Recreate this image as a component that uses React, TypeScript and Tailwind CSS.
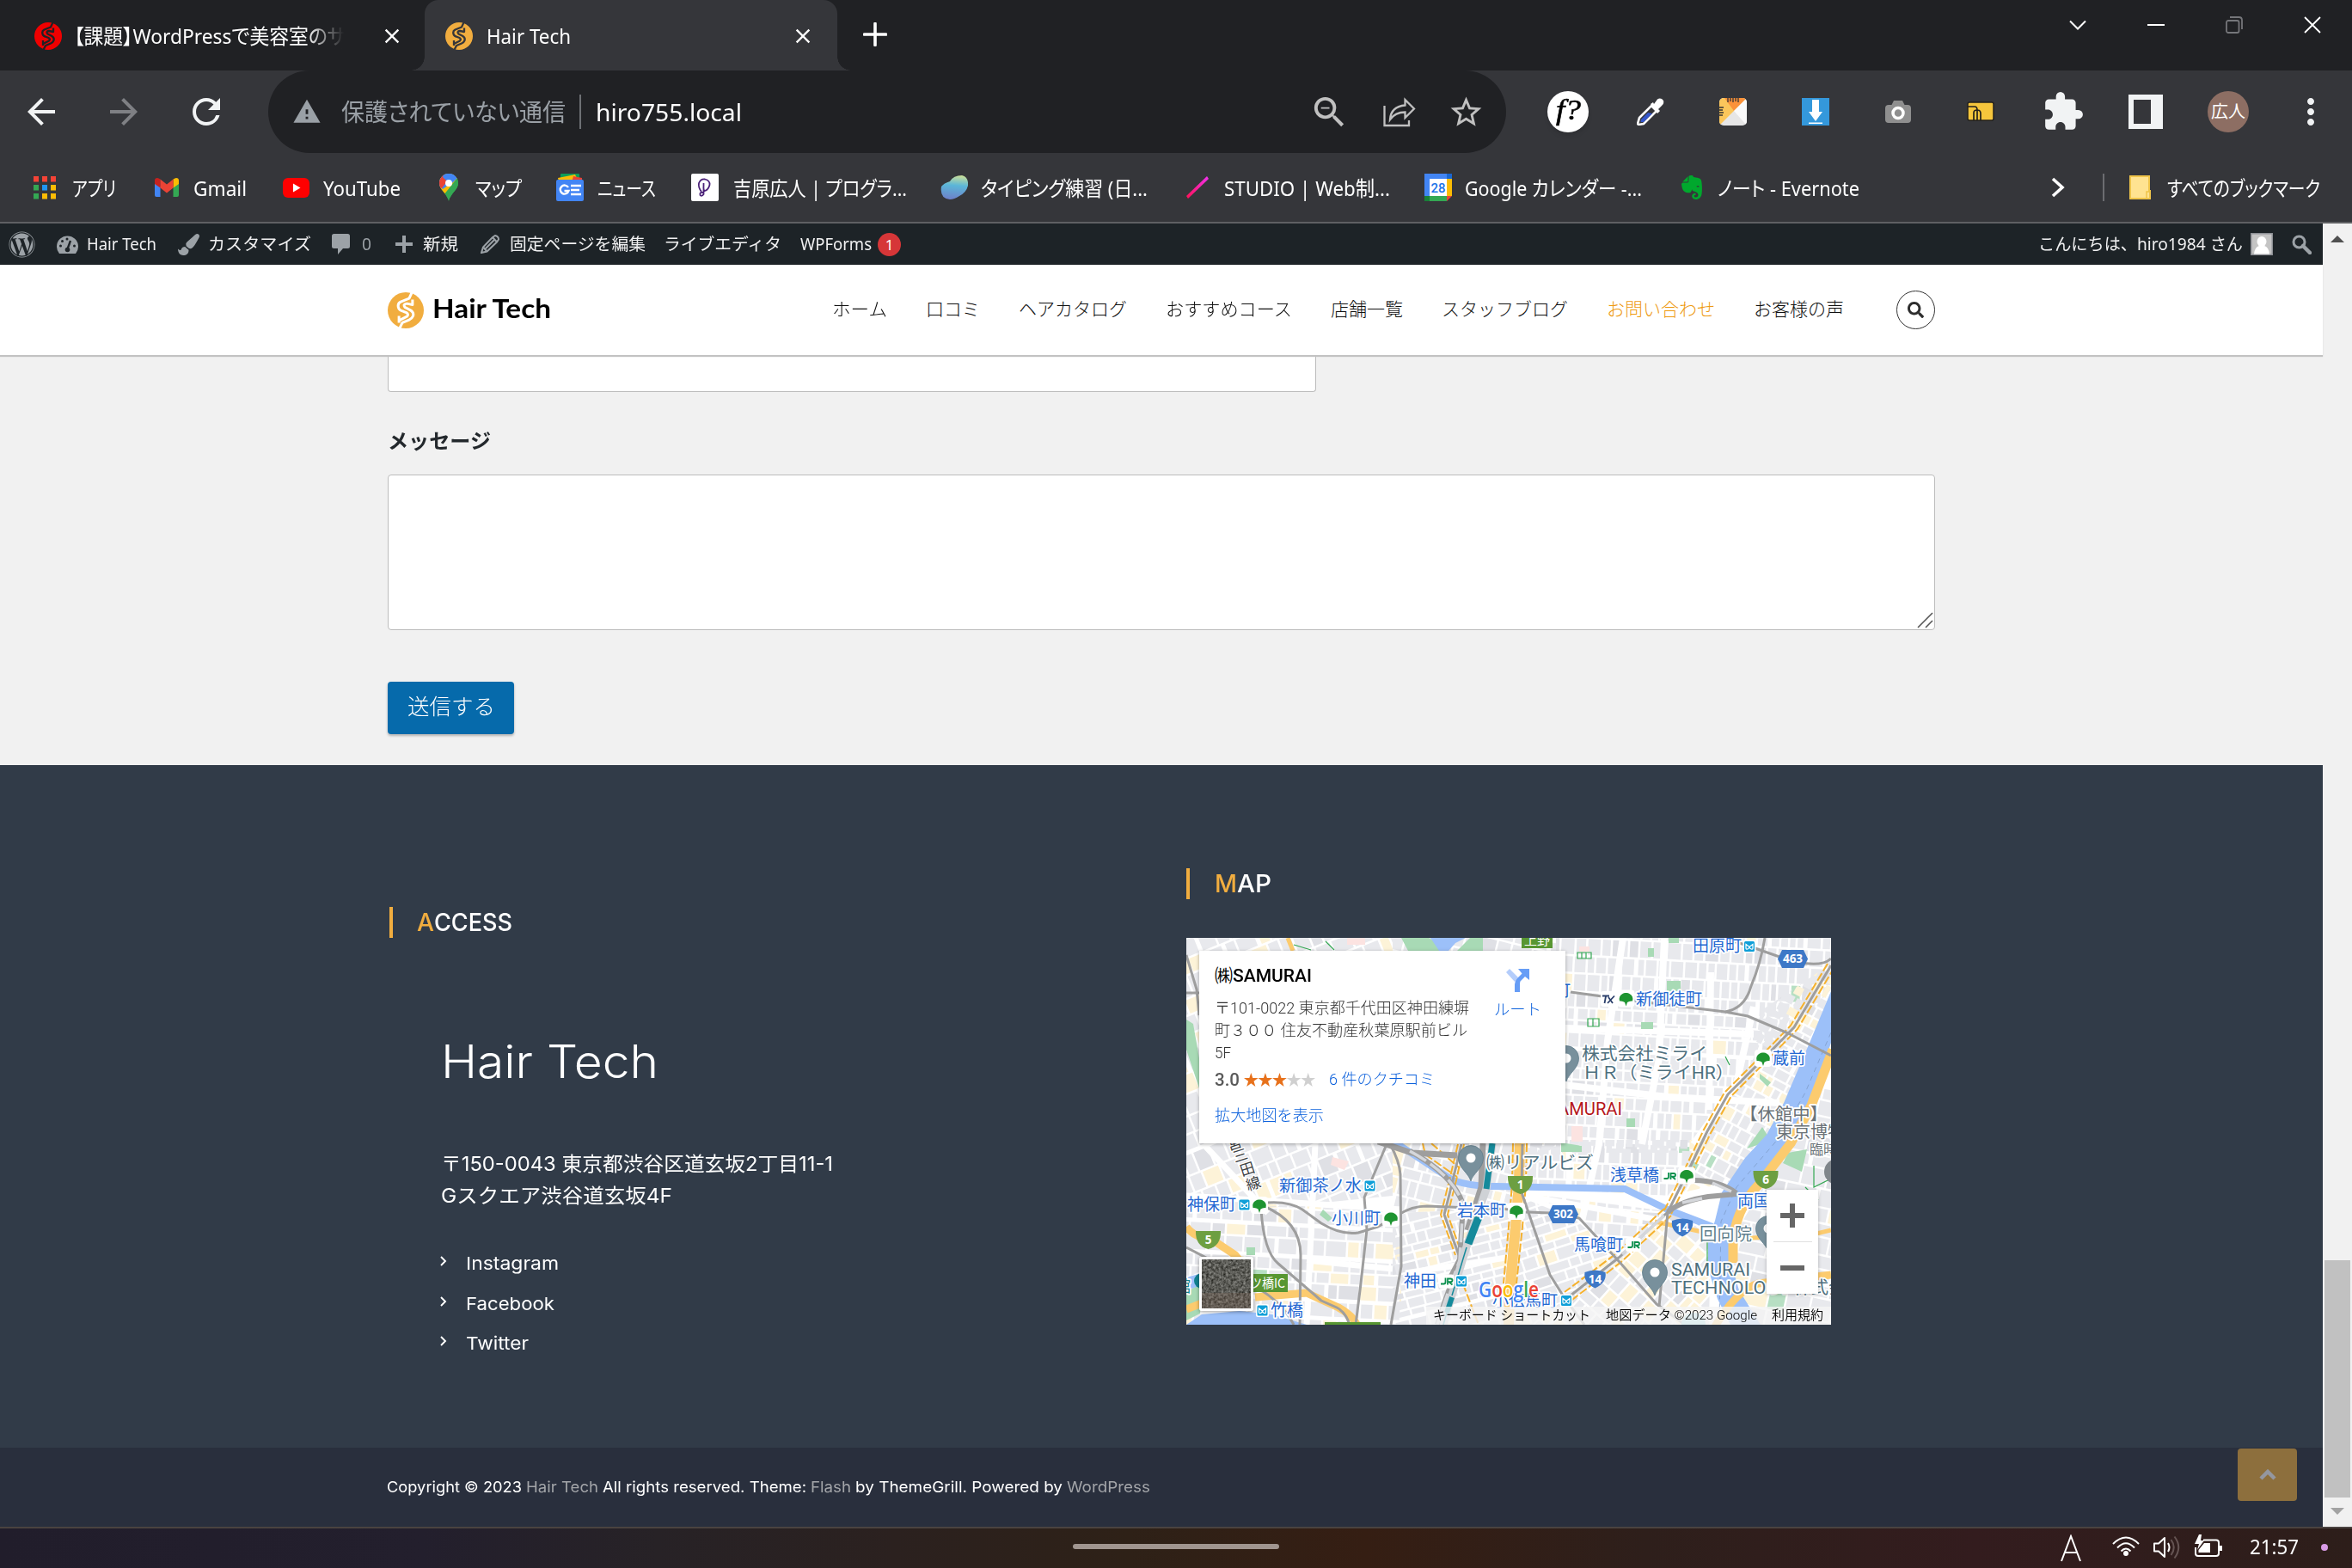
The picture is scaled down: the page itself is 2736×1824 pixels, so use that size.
import { useLayoutEffect, useRef } from "react";
import type { ReactNode } from "react";
import {
  MdArrowBack,
  MdArrowForward,
  MdRefresh,
  MdWarning,
  MdStarBorder,
  MdZoomOut,
  MdExtension,
  MdMoreVert,
  MdClose,
} from "react-icons/md";
import { FaWordpress, FaPaintBrush, FaEvernote, FaSearch } from "react-icons/fa";

/** A single line of text condensed or expanded horizontally so that it fills `w` pixels. */
function T({ w, className = "", children }: { w: number; className?: string; children: string }) {
  const ref = useRef<HTMLSpanElement>(null);
  useLayoutEffect(() => {
    const el = ref.current;
    if (!el) return;
    el.style.transform = "none";
    const natural = el.getBoundingClientRect().width;
    el.style.transform = `scaleX(${w / natural})`;
    el.style.marginRight = `${w - natural}px`;
  }, [w, children]);
  return (
    <span ref={ref} className={`inline-block shrink-0 origin-left whitespace-pre ${className}`}>
      {children}
    </span>
  );
}

function SLogo({ size, bg, fg }: { size: number; bg: string; fg: string }) {
  return (
    <svg width={size} height={size} viewBox="0 0 32 32" className="shrink-0">
      <circle cx="16" cy="16" r="16" fill={bg} />
      <g fill="none" stroke={fg} strokeWidth="2.3" strokeLinejoin="round">
        <path d="M22 -1 L19 5.500 L11.500 8.500 Q8.500 10 9.500 13.500 Q10 16 14 17 L16.500 18 Q19 19.500 17 21.500 L10 25" />
        <path d="M22 6.500 V11 L17 10 Q13 10.500 15.500 13.500 L19.500 15.500 Q23.500 17.500 22.500 21 Q21.500 23.500 19 24.500 L13 27 L10 33 M10 21 V27" />
      </g>
    </svg>
  );
}

function TabStrip() {
  return (
    <div className="flex h-[82px] bg-[#202124] text-[24px] leading-none text-[#f1f3f4]">
      <div className="flex w-[494px] items-center pl-10 pt-[2px]">
        <SLogo size={32} bg="#f00000" fg="#202124" />
        <div className="relative ml-[14px] w-[314px] overflow-hidden py-2">
          <T w={354} className="text-white [font-feature-settings:'palt']">【課題】WordPressで美容室のサイト</T>
          <div className="absolute inset-y-0 right-0 w-[44px] bg-linear-to-r from-[#20212400] to-[#202124]" />
        </div>
        <MdClose className="ml-[42px] size-7 text-white" />
      </div>
      <div className="relative flex w-[480px] items-center rounded-t-[16px] bg-[#35363a] pl-6 pt-[2px]">
        <div className="absolute -left-[16px] bottom-0 size-4 bg-[radial-gradient(circle_at_0_0,#202124_15.500px,#35363a_16px)]" />
        <div className="absolute -right-[16px] bottom-0 size-4 bg-[radial-gradient(circle_at_100%_0,#202124_15.500px,#35363a_16px)]" />
        <SLogo size={32} bg="#f1ad3f" fg="#35363a" />
        <T w={98} className="ml-4 text-white">Hair Tech</T>
        <MdClose className="ml-auto mr-[26px] size-7 text-white" />
      </div>
      <svg width="28" height="28" viewBox="0 0 28 28" className="ml-[30px] mt-[26px]">
        <path d="M14 1.500 V26.500 M1.500 14 H26.500" stroke="#fff" strokeWidth="3.600" strokeLinecap="round" />
      </svg>
      <div className="ml-auto flex items-start gap-[71px] pr-9 pt-[19px]">
        <svg width="20" height="20" viewBox="0 0 20 20" fill="none">
          <path d="M1 5.500 L10 14.500 L19 5.500" stroke="#fff" strokeWidth="2" />
        </svg>
        <svg width="20" height="20" viewBox="0 0 20 20">
          <path d="M0 10 H20" stroke="#fff" strokeWidth="2" />
        </svg>
        <svg width="20" height="20" viewBox="0 0 20 20" fill="none" stroke="#75767a" strokeWidth="1.800">
          <rect x="1" y="5" width="14.500" height="14" rx="2" />
          <path d="M5 1 H15.500 Q19 1 19 4.500 V15" />
        </svg>
        <svg width="20" height="20" viewBox="0 0 20 20">
          <path d="M1 1 L19 19 M19 1 L1 19" stroke="#fff" strokeWidth="1.800" />
        </svg>
      </div>
    </div>
  );
}

function Slot({ children }: { children: ReactNode }) {
  return <div className="flex w-24 shrink-0 items-center justify-center">{children}</div>;
}

function Toolbar() {
  return (
    <div className="flex h-24 items-stretch bg-[#35363a] text-white">
      <div className="flex w-[312px] items-center pl-6 text-[#f1f3f4]">
        <MdArrowBack className="size-12" />
        <MdArrowForward className="ml-12 size-12 text-[#7f8084]" />
        <MdRefresh className="ml-12 size-12" />
      </div>
      <div className="flex w-[1440px] items-center rounded-full bg-[#202124] pl-7 text-[28px] leading-none">
        <MdWarning className="size-[34px] text-[#9aa0a6]" />
        <T w={261} className="ml-[23px] text-[#9aa0a6] [font-feature-settings:'palt']">保護されていない通信</T>
        <div className="ml-[16px] h-10 w-[2px] bg-[#6d7074]" />
        <T w={170} className="ml-[17px]">hiro755.local</T>
        <div className="ml-auto flex items-center pr-6 text-[#c0c0c0]">
          <MdZoomOut className="size-[47px]" />
          <svg width="38" height="35" viewBox="0 0 38 35" fill="none" stroke="currentColor" strokeWidth="2.300" className="ml-[39px]">
            <path d="M1.500 10 V33 H30 V27" />
            <path d="M25.500 3 L36 13.500 L25.500 24 V17.500 Q14 17.500 8 26 Q9 11 25.500 9.500 Z" />
          </svg>
          <MdStarBorder className="ml-[37px] mr-[1px] size-[43px]" />
        </div>
      </div>
      <div className="ml-6 flex">
        <Slot>
          <div className="flex size-12 items-center justify-center rounded-full bg-white pb-1 font-['Liberation_Serif',serif] text-[34px] italic leading-none text-black shadow-md">
            <T w={29} className="[-webkit-text-stroke:0.600px_black]">f?</T>
          </div>
        </Slot>
        <Slot>
          <svg width="32" height="32" viewBox="0 0 32 32">
            <path d="M17 9 L23 15 L8 30 L2 31 L1 30 L3 23 Z" fill="#35363a" stroke="#fff" strokeWidth="2.600" />
            <path d="M13 17 L18 18 L8 28 L4.500 28 L5 25 Z" fill="#3355c9" />
            <path d="M16 7 L19 5 L20 7 L24 1.500 Q28 -1 31 3 Q32 7 29 9 L25 13 L27 15 L24 18 Z" fill="#fff" />
          </svg>
        </Slot>
        <Slot>
          <svg width="32" height="32" viewBox="0 0 32 32">
            <defs>
              <clipPath id="ruler"><rect width="32" height="32" rx="5" /></clipPath>
            </defs>
            <g clipPath="url(#ruler)">
              <rect width="32" height="32" fill="#e6e6e6" />
              <path d="M0 0 H32 L0 32 Z" fill="#fbc65b" />
              <path d="M6 0 H32 L17 15 Z" fill="#fb923a" />
              <path d="M32 0 V32 L17 15 Z" fill="#fafafa" />
            </g>
            <path d="M10 0 V5 M13 0 V4 M16 0 V5 M19 0 V4 M22 0 V5 M0 11 H5 M0 14 H4 M0 17 H5 M0 20 H4" stroke="#333" strokeWidth="1.300" />
          </svg>
        </Slot>
        <Slot>
          <svg width="32" height="32" viewBox="0 0 32 32">
            <rect width="32" height="32" fill="#3498db" />
            <path d="M12 2 H20 V16 H24 L16 27 L8 16 H12 Z M8 28.500 H24 V30 H8 Z" fill="#fff" />
          </svg>
        </Slot>
        <Slot>
          <svg width="30" height="28" viewBox="0 0 30 28">
            <rect y="6" width="30" height="21" rx="4" fill="#8f8f8f" />
            <path d="M7 7 L10 1 H20 L23 7 Z" fill="#8f8f8f" />
            <circle cx="15" cy="15.500" r="6" fill="#8f8f8f" stroke="#fff" strokeWidth="3.500" />
          </svg>
        </Slot>
        <Slot>
          <svg width="32" height="24" viewBox="0 0 32 24">
            <rect x="1" y="1" width="30" height="21" rx="2" fill="#f6c63c" stroke="#23211c" strokeWidth="1.500" />
            <path d="M1 6 H9 Q12 6 12 10 V22 M8 22 V13 Q8 10 12 10 Q16 10 16 14 V22" fill="none" stroke="#23211c" strokeWidth="1.700" />
          </svg>
        </Slot>
        <Slot><MdExtension className="size-[50px] text-[#f1f3f4]" /></Slot>
        <Slot>
          <div className="h-10 w-10 border-y-[6px] border-l-[6px] border-r-[14px] border-[#f1f3f4]" />
        </Slot>
        <Slot>
          <div className="flex size-12 items-center justify-center rounded-full bg-[#8d6e63] text-[20px] leading-none">
            <T w={40}>広人</T>
          </div>
        </Slot>
        <Slot><MdMoreVert className="size-12 text-[#f1f3f4]" /></Slot>
      </div>
    </div>
  );
}

const appDots = ["#f44336", "#f44336", "#f44336", "#34a853", "#2196f3", "#fbbc05", "#34a853", "#fbbc05", "#fbbc05"];

const bookmarks: { label: string; w: number; lead: string; gap: string; icon: ReactNode }[] = [
  {
    label: "アプリ", w: 51, lead: "ml-[39px]", gap: "ml-[19px]",
    icon: (
      <svg width="26" height="27" viewBox="0 0 26 27">
        {appDots.map((c, i) => (
          <rect key={i} x={(i % 3) * 10} y={Math.floor(i / 3) * 10} width="6" height="6.500" fill={c} />
        ))}
      </svg>
    ),
  },
  {
    label: "Gmail", w: 62, lead: "ml-[45px]", gap: "ml-[17px]",
    icon: (
      <svg width="28" height="22" viewBox="0 0 28 22">
        <path d="M0 3 V20 Q0 22 2 22 H6.500 V10 Z" fill="#4285f4" />
        <path d="M28 3 V20 Q28 22 26 22 H21.500 V10 Z" fill="#34a853" />
        <path d="M0 7 V3 Q0 0 3 0 Q4.500 0 6.500 1.500 V11.500 Z" fill="#c5221f" />
        <path d="M28 7 V3 Q28 0 25 0 Q23.500 0 21.500 1.500 V11.500 Z" fill="#fbbc04" />
        <path d="M6.500 1.500 L14 7.500 L21.500 1.500 V11.500 L14 17.500 L6.500 11.500 Z" fill="#ea4335" />
      </svg>
    ),
  },
  {
    label: "YouTube", w: 90, lead: "ml-[42px]", gap: "ml-[16px]",
    icon: (
      <svg width="31" height="23" viewBox="0 0 31 23">
        <rect width="31" height="23" rx="6" fill="#f00" />
        <path d="M12 6.500 L20.500 11.500 L12 16.500 Z" fill="#fff" />
      </svg>
    ),
  },
  {
    label: "マップ", w: 54, lead: "ml-[45px]", gap: "ml-[20px]",
    icon: (
      <svg width="22" height="32" viewBox="0 0 22 32">
        <defs>
          <clipPath id="pin"><path d="M11 0 A11 11 0 0 1 22 11 C22 19 13.500 22 11 32 C8.500 22 0 19 0 11 A11 11 0 0 1 11 0 Z" /></clipPath>
        </defs>
        <g clipPath="url(#pin)">
          <rect width="22" height="32" fill="#34a853" />
          <path d="M0 0 H22 V6 L4 26 L0 22 Z" fill="#fbbc04" />
          <path d="M0 0 H22 V4 L11 13 L4 18 L0 14 Z" fill="#4285f4" />
          <path d="M0 0 H6 L9 9 L3 17 L0 16 Z" fill="#ea4335" />
          <path d="M5 0 H22 V4 L13 13 L4 4 Z" fill="#4285f4" />
          <path d="M22 6 V20 L8 32 L6 24 L20 6 Z" fill="#34a853" />
        </g>
        <circle cx="11" cy="11" r="4" fill="#fff" />
      </svg>
    ),
  },
  {
    label: "ニュース", w: 68, lead: "ml-[40px]", gap: "ml-[16px]",
    icon: (
      <svg width="32" height="32" viewBox="0 0 32 32">
        <rect x="5" width="22" height="12" rx="1" fill="#0f9d58" />
        <path d="M2 5 L22 1 L26 9 H3 Z" fill="#fbbc04" />
        <path d="M20 3 L30 5 V10 H18 Z" fill="#ea4335" />
        <rect y="7" width="32" height="25" rx="2" fill="#4285f4" />
        <path d="M17 14 H29 M17 19 H27 M17 24 H29" stroke="#fff" strokeWidth="2.400" />
        <path d="M14 16 A5 5 0 1 0 14.500 20 H9.500" fill="none" stroke="#fff" strokeWidth="2.400" />
      </svg>
    ),
  },
  {
    label: "吉原広人 | プログラ...", w: 202, lead: "ml-[41px]", gap: "ml-[17px]",
    icon: (
      <svg width="32" height="32" viewBox="0 0 32 32">
        <rect width="32" height="32" rx="2" fill="#fff" />
        <path d="M12 21 Q8 16 9 11 Q11 6 16 6.500 Q22 8 21.500 13 Q20 19 16 20 Q14 20 14.500 14 V11 M14.500 18 V24 Q12 27 10.500 25 Q9.500 21 14 22" fill="none" stroke="#4b2178" strokeWidth="1.800" />
      </svg>
    ),
  },
  {
    label: "タイピング練習 (日...", w: 194, lead: "ml-[39px]", gap: "ml-[15px]",
    icon: (
      <svg width="32" height="28" viewBox="0 0 32 28">
        <defs>
          <linearGradient id="blob" x1="0.400" y1="0" x2="0.300" y2="1">
            <stop offset="0" stopColor="#c5dd9b" />
            <stop offset="0.400" stopColor="#5bb6d8" />
            <stop offset="1" stopColor="#6e7fc9" />
          </linearGradient>
        </defs>
        <path d="M1 13 Q4 9 11 7 Q15 0 25 0 Q33 2 32 12 Q30 20 22 24 Q16 28 11 28 Q-1 27 1 13 Z" fill="url(#blob)" />
      </svg>
    ),
  },
  {
    label: "STUDIO | Web制...", w: 193, lead: "ml-[45px]", gap: "ml-[18px]",
    icon: (
      <svg width="26" height="26" viewBox="0 0 26 26">
        <defs>
          <linearGradient id="slash" x1="1" y1="0" x2="0" y2="1">
            <stop offset="0" stopColor="#f032f0" />
            <stop offset="1" stopColor="#ff1053" />
          </linearGradient>
        </defs>
        <path d="M24 0 L26 3 L2 26 L0 23 Z" fill="url(#slash)" />
      </svg>
    ),
  },
  {
    label: "Google カレンダー -...", w: 206, lead: "ml-[40px]", gap: "ml-[15px]",
    icon: (
      <svg width="32" height="32" viewBox="0 0 32 32">
        <rect width="26" height="26" fill="#4285f4" />
        <rect x="26" width="6" height="6" fill="#1967d2" />
        <rect x="26" y="6" width="6" height="20" fill="#fbbc04" />
        <rect y="26" width="6" height="6" fill="#188038" />
        <rect x="6" y="26" width="20" height="6" fill="#34a853" />
        <path d="M26 26 H32 L26 32 Z" fill="#ea4335" />
        <rect x="6" y="6" width="20" height="20" fill="#fff" />
        <text x="16" y="21.500" textAnchor="middle" fontSize="15" fill="#1a73e8" fontFamily="Roboto, sans-serif" fontWeight="500">28</text>
      </svg>
    ),
  },
  {
    label: "ノート - Evernote", w: 165, lead: "ml-[42px]", gap: "ml-[15px]",
    icon: <FaEvernote className="-mr-[1px] h-8 w-[32px] text-[#00a82d]" />,
  },
];

function BookmarksBar() {
  return (
    <div className="flex h-[82px] items-center border-b-2 border-[#5f6063] bg-[#35363a] text-[24px] leading-none text-white [font-feature-settings:'palt']">
      {bookmarks.map((b) => (
        <div key={b.label} className={`flex shrink-0 items-center ${b.lead}`}>
          {b.icon}
          <div className={`pt-[2px] ${b.gap}`}>
            <T w={b.w}>{b.label}</T>
          </div>
        </div>
      ))}
      <div className="ml-auto flex items-center pr-[37px]">
        <svg width="16" height="24" viewBox="0 0 16 24">
          <path d="M2 2 L13 12 L2 22" fill="none" stroke="#fff" strokeWidth="3.600" />
        </svg>
        <div className="ml-[44px] h-8 w-[2px] bg-[#6b6c70]" />
        <svg width="25" height="28" viewBox="0 0 25 28" className="ml-[29px]">
          <path d="M1 1 H23 V18 H24 V27 H1 Z" fill="#ffe391" stroke="#f0c54a" strokeWidth="2" />
          <path d="M20 27 V19 H24" fill="none" stroke="#f0c54a" strokeWidth="1.500" />
        </svg>
        <div className="ml-[19px] pt-[2px]">
          <T w={178}>すべてのブックマーク</T>
        </div>
      </div>
    </div>
  );
}

function AdminBar() {
  return (
    <div className="flex h-12 items-center bg-[#1d2327] text-[19.500px] leading-none text-[#f0f0f1]">
      <FaWordpress className="ml-[10px] size-[31px] text-[#9ca2a7]" />
      <svg width="25" height="21" viewBox="0 0 25 21" className="ml-[25px]">
        <path d="M3 21 A12.500 12.500 0 1 1 22 21 Z" fill="#9ca2a7" />
        <path d="M12 17 L16 6" stroke="#1d2327" strokeWidth="2.400" />
        <g fill="#1d2327">
          <circle cx="12.500" cy="16.500" r="2.800" /><circle cx="4.500" cy="12" r="1.500" /><circle cx="6.500" cy="6.500" r="1.500" />
          <circle cx="12" cy="4" r="1.500" /><circle cx="20.500" cy="12" r="1.500" />
        </g>
      </svg>
      <T w={81} className="ml-[10px]">Hair Tech</T>
      <FaPaintBrush className="ml-[25px] size-[25px] text-[#9ca2a7]" />
      <T w={120} className="ml-[10px]">カスタマイズ</T>
      <svg width="21" height="24" viewBox="0 0 21 24" className="ml-[24px]">
        <path d="M2.500 0 H18.500 Q21 0 21 2.500 V14.500 Q21 17 18.500 17 H13 L7 24 V17 H2.500 Q0 17 0 14.500 V2.500 Q0 0 2.500 0 Z" fill="#9ca2a7" />
      </svg>
      <T w={11} className="ml-[14px] text-[#9ca2a7]">0</T>
      <svg width="20" height="20" viewBox="0 0 20 20" className="ml-[28px]">
        <path d="M10 0 V20 M0 10 H20" stroke="#9ca2a7" strokeWidth="4" />
      </svg>
      <T w={41} className="ml-[12px]">新規</T>
      <svg width="22" height="22" viewBox="0 0 22 22" className="ml-[26px]" fill="none" stroke="#9ca2a7" strokeWidth="2">
        <path d="M14 3 L17 1 Q21 2 21 5.500 L19 8.500 L7.500 19.500 L1 21 L3 14.500 Z" />
        <path d="M14 3 L19 8.500 M3 14.500 L7.500 19.500 M5.500 16.500 L16 6" />
      </svg>
      <T w={158} className="ml-[12px]">固定ページを編集</T>
      <T w={137} className="ml-[21px]">ライブエディタ</T>
      <T w={83} className="ml-[22px]">WPForms</T>
      <div className="ml-[7px] flex size-[27px] items-center justify-center rounded-full bg-[#d63638] text-[17px] text-white">1</div>
      <T w={238} className="ml-auto">こんにちは、hiro1984 さん</T>
      <svg width="26" height="26" viewBox="0 0 26 26" className="ml-[9px]">
        <rect width="26" height="26" fill="#8c8f94" />
        <rect x="1.500" y="1.500" width="23" height="23" fill="#c4c4c4" />
        <ellipse cx="13" cy="10" rx="5.500" ry="6" fill="#fff" />
        <path d="M4 24.500 Q5 16 10 15 H16 Q21 16 22 24.500 Z" fill="#fff" />
      </svg>
      <svg width="23" height="23" viewBox="0 0 23 23" className="ml-[22px] mr-[13px]">
        <circle cx="8.500" cy="8.500" r="6.500" fill="none" stroke="#9ca2a7" strokeWidth="3" />
        <path d="M13 13 L21 21" stroke="#9ca2a7" strokeWidth="4.500" strokeLinecap="round" />
      </svg>
    </div>
  );
}

const navItems: [string, number, string][] = [
  ["ホーム", 64, ""],
  ["口コミ", 63, ""],
  ["ヘアカタログ", 126, ""],
  ["おすすめコース", 147, ""],
  ["店舗一覧", 84, ""],
  ["スタッフブログ", 147, ""],
  ["お問い合わせ", 126, "text-[#ee9a10]"],
  ["お客様の声", 105, ""],
];

function SiteHeader() {
  return (
    <div className="relative z-10 flex h-[105px] items-center bg-white pl-[451px] shadow-[0_2px_1px_#c2c2c2]">
      <SLogo size={42} bg="#f1ad3f" fg="#ffffff" />
      <T w={138} className="mb-[6px] ml-[10px] font-[Lato,sans-serif] text-[30px] font-bold leading-none text-black">Hair Tech</T>
      <div className="mb-[2px] ml-[327px] flex items-center gap-[45px] text-[21px] font-light leading-none text-[#111]">
        {navItems.map(([label, w, color]) => (
          <T key={label} w={w} className={color}>{label}</T>
        ))}
      </div>
      <div className="ml-[61px] flex size-[45px] items-center justify-center rounded-full border-[1.500px] border-[#333]">
        <FaSearch className="size-[19px] text-[#2d2d2d]" />
      </div>
    </div>
  );
}

function ContactForm() {
  return (
    <div className="flex h-[477px] flex-col items-start bg-[#f1f1f1] pl-[451px]">
      <div className="h-[43px] w-[1080px] shrink-0 rounded-b-[4px] border-[1.500px] border-t-0 border-[#bcbcbc] bg-white" />
      <div className="mt-[39px] flex h-9 items-center text-[24px] font-bold leading-none text-[#23282c]">
        <T w={120}>メッセージ</T>
      </div>
      <div className="mt-[21px] flex h-[181px] w-[1800px] shrink-0 items-end justify-end rounded-[4px] border-[1.500px] border-[#bcbcbc] bg-white">
        <svg width="20" height="20" viewBox="0 0 20 20">
          <path d="M1 18 L18 1 M10 18 L18 10" stroke="#555" strokeWidth="1.600" />
        </svg>
      </div>
      <div className="mt-[60px] flex h-[61px] w-[147px] shrink-0 items-center justify-center rounded-[4px] bg-[#066aab] text-[25.500px] font-light leading-none text-white shadow-[0_2px_3px_#0004]">
        <T w={102} className="mb-[3px]">送信する</T>
      </div>
    </div>
  );
}

/* ---------- map ---------- */

function rng(seed: number) {
  let s = seed;
  return () => {
    s = (s * 1664525 + 1013904223) % 4294967296;
    return s / 4294967296;
  };
}

type District = { id: string; clip: string; cx: number; cy: number; r: number; angle: number; cw: number; ch: number; warm: number };

const districts: District[] = [
  { id: "d1", clip: "430,0 750,0 750,60 640,180 600,250 430,250", cx: 590, cy: 120, r: 200, angle: 3, cw: 9, ch: 16, warm: 0.03 },
  { id: "d2", clip: "668,85 750,30 750,60 700,200 650,280 560,300 600,240 660,140", cx: 680, cy: 160, r: 160, angle: 28, cw: 9, ch: 11, warm: 0.25 },
  { id: "d3", clip: "395,235 610,235 560,300 395,290", cx: 500, cy: 260, r: 120, angle: 2, cw: 9, ch: 13, warm: 0.1 },
  { id: "d4", clip: "0,0 240,0 240,300 90,315 0,310", cx: 120, cy: 180, r: 210, angle: -22, cw: 13, ch: 19, warm: 0.12 },
  { id: "d5", clip: "0,310 90,312 250,312 250,450 0,450", cx: 130, cy: 380, r: 170, angle: 3, cw: 16, ch: 13, warm: 0.15 },
  { id: "d6", clip: "240,0 430,0 430,240 380,290 380,315 240,320", cx: 310, cy: 170, r: 240, angle: 14, cw: 13, ch: 15, warm: 0.2 },
  { id: "d7", clip: "240,320 380,315 380,450 240,450", cx: 310, cy: 385, r: 110, angle: -14, cw: 14, ch: 9, warm: 0.1 },
  { id: "d8", clip: "380,298 450,326 510,376 445,420 400,450 380,450", cx: 440, cy: 380, r: 110, angle: -18, cw: 16, ch: 10, warm: 0.1 },
  { id: "d9", clip: "400,298 560,318 505,374 455,326", cx: 490, cy: 330, r: 100, angle: 4, cw: 11, ch: 12, warm: 0.1 },
  { id: "d10", clip: "560,318 610,340 608,450 400,450 505,374", cx: 520, cy: 390, r: 130, angle: 42, cw: 11, ch: 14, warm: 0.3 },
  { id: "d11", clip: "750,150 750,450 640,450 635,350 700,240", cx: 700, cy: 320, r: 150, angle: 12, cw: 22, ch: 18, warm: 0.05 },
];

function Blocks({ d, seed }: { d: District; seed: number }) {
  const rand = rng(seed * 7919 + 13);
  const rects: ReactNode[] = [];
  let y = d.cy - d.r;
  let k = 0;
  while (y < d.cy + d.r) {
    const h = d.ch * (0.65 + rand() * 0.7);
    let x = d.cx - d.r;
    while (x < d.cx + d.r) {
      const w = d.cw * (0.6 + rand() * 1.1);
      const c = rand();
      const fill = c < d.warm ? "#fdf3d8" : c > 0.988 ? "#b7dfc3" : c > 0.9 ? "#dfe0e5" : "#e8e9ed";
      rects.push(<rect key={k++} x={x.toFixed(1)} y={y.toFixed(1)} width={w.toFixed(1)} height={h.toFixed(1)} fill={fill} />);
      x += w + (rand() > 0.88 ? 5 : 2.5);
    }
    y += h + (rand() > 0.85 ? 5 : 2.5);
  }
  return (
    <g clipPath={`url(#${d.id})`}>
      <clipPath id={d.id}><polygon points={d.clip} /></clipPath>
      <g transform={`rotate(${d.angle} ${d.cx} ${d.cy})`}>{rects}</g>
    </g>
  );
}

function Label({ x, y, w, size = 19, fill = "#2468d2", children }: { x: number; y: number; w: number; size?: number; fill?: string; children: string }) {
  return (
    <text x={x} y={y + size * 0.36} textLength={w} lengthAdjust="spacingAndGlyphs" fontSize={size} fill={fill} stroke="#fff" strokeWidth="3.500" strokeLinejoin="round" paintOrder="stroke" fontFamily="Roboto, 'Noto Sans CJK JP', sans-serif">
      {children}
    </text>
  );
}

function Ginkgo({ x, y }: { x: number; y: number }) {
  return (
    <g transform={`translate(${x} ${y})`}>
      <rect x="-10" y="-10" width="20" height="20" rx="4" fill="#fff" />
      <path d="M0 9 L-1.500 4.500 Q-4 2.500 -7.500 3 Q-9 -3 -4 -5.500 Q-2 -7 0 -6.500 Q2 -7 4 -5.500 Q9 -3 7.500 3 Q4 2.500 1.500 4.500 Z" fill="#1e9431" />
    </g>
  );
}

function Metro({ x, y }: { x: number; y: number }) {
  return (
    <g transform={`translate(${x} ${y})`}>
      <rect x="-7.500" y="-7.500" width="15" height="15" rx="2" fill="#fff" />
      <rect x="-6" y="-6" width="12" height="12" rx="1.500" fill="#0f9fd8" />
      <path d="M-4 -2.500 V2 Q-4 3.500 -2 3 Q0 2 0 0 Q0 2 2 3 Q4 3.500 4 2 V-2.500 L0 0.500 Z" fill="none" stroke="#fff" strokeWidth="1.200" />
    </g>
  );
}

function Jr({ x, y }: { x: number; y: number }) {
  return (
    <g transform={`translate(${x} ${y})`}>
      <rect x="-9" y="-8" width="18" height="16" rx="3" fill="#fff" />
      <path d="M-6.500 3 H-3 Q-1 3 -1 1 V-4 M1.500 4 V-3 H5 Q7 -3 7 -1.200 Q7 0.700 5 0.700 H3 L7 4" fill="none" stroke="#0b8f4d" strokeWidth="1.800" />
    </g>
  );
}

function Shield({ x, y, n, kind }: { x: number; y: number; n: string; kind: "green" | "blue" | "hex" }) {
  const d =
    kind === "hex"
      ? "M-17.500 0 L-12.500 -10.500 H12.500 L17.500 0 L12.500 10.500 H-12.500 Z"
      : kind === "green"
        ? "M-14.500 -10.500 H14.500 Q15 7 0 10.500 Q-15 7 -14.500 -10.500 Z"
        : "M-12 -8 Q0 -13 12 -8 Q14 4 0 10.500 Q-14 4 -12 -8 Z";
  return (
    <g transform={`translate(${x} ${y})`}>
      <path d={d} fill={kind === "green" ? "#6d9f42" : "#3d78c7"} />
      <text y="4.500" textAnchor="middle" fontSize="13.500" fontWeight="700" fill="#fff" fontFamily="'Noto Sans', sans-serif">{n}</text>
    </g>
  );
}

function Pin({ x, y }: { x: number; y: number }) {
  return (
    <g transform={`translate(${x} ${y})`}>
      <path d="M0 27 C-3 17 -14.500 12 -14.500 0 A14.500 14.500 0 0 1 14.500 0 C14.500 12 3 17 0 27 Z" fill="#78909c" stroke="#607d8b" strokeWidth="0.800" />
      <circle r="5.500" fill="#fff" />
    </g>
  );
}

const rails = [
  "M447 63 L527 74 L627 86 Q650 82 657 56 Q668 30 673 0",
  "M627 86 L653 91 L700 111 L750 137",
  "M630 2 L653 9 L687 21 Q735 38 750 24",
  "M93 308 Q120 306 135 316 L157 332 Q180 346 200 343 L223 336 L247 322 Q262 312 280 312 L380 316",
  "M87 316 Q90 365 107 379 L157 422 L175 430 Q185 435 190 450",
  "M90 312 Q133 330 133 369 L132 450",
  "M233 240 L207 302 L210 339 L203 402 L197 450",
  "M237 240 Q248 260 249 275 L250 382 L238 450",
  "M0 360 Q40 380 70 400 Q110 420 125 450",
  "M391 240 L390 296 L423 392 L440 419 L463 450",
  "M395 319 L423 320 L457 326 L503 376 L547 426 L580 450",
  "M750 32 L707 104 L670 142 L630 182 L606 225 L580 279 L560 319 L550 429",
  "M560 319 L503 372 L447 416",
  "M320 240 L310 282 L300 322 L317 369",
  "M0 20 L12 60 L15 90 M0 64 H15",
];

const yellowRails = [
  "M754 34 L711 106 L674 144 L634 184 L610 227 L584 281 L564 321",
  "M746 30 L703 102 L666 140 L626 180 L602 223 L576 277 L556 317",
  "M564 323 L507 376 L445 424",
  "M556 315 L499 368 L440 412",
  "M316 240 L306 282 L296 322 L313 369 M323 240 L314 282 L304 322 L321 369 M317 390 L340 450",
  "M275 239 L278 252 L315 278 M285 239 L318 268",
];

function MapCanvas() {
  return (
    <svg width="750" height="450" viewBox="0 0 750 450" className="block">
      <rect width="750" height="450" fill="#fff" />
      {districts.map((d, i) => <Blocks key={d.id} d={d} seed={i + 1} />)}

      <g fill="none" stroke="#fff">
        <path strokeWidth="8" d="M508 0 L490 120 L480 240 L460 330 M556 0 L550 140 L530 240 M610 40 L608 200 M440 105 L660 112 M430 170 L560 185 L690 192 M660 80 L640 170 L590 240" />
        <path strokeWidth="7" d="M150 240 L140 450 M0 300 L250 316 M140 375 L240 385 M255 390 L385 370 M445 240 V300 M395 300 L560 330 M20 240 L95 320 M0 400 L60 370" />
      </g>

      <g fill="#a8dab5">
        <path d="M250 0 H282 Q296 8 305 15 H258 Z M345 0 H330 L315 15 H345 Z M0 95 L8 100 L15 140 V175 L0 130 Z" />
        <path d="M559 50 H575 V62 H559 Z M529 98 H543 V106 H529 Z M537 12 H544 V22 H537 Z M561 0 H573 V6 H561 Z M159 316 L170 326 L165 330 L155 322 Z M667 158 L680 168 L676 173 L667 164 Z M512 210 H522 V220 H512 Z M670 220 L680 236 L652 245 Z" />
        <path d="M700 250 L722 246 L716 272 L694 262 Z M0 412 L20 400 L16 437 L0 445 Z M70 360 H80 V369 H70 Z M436 238 L460 242 V249 H436 Z" />
      </g>
      <g fill="none" stroke="#34a853" strokeWidth="1.200">
        <path d="M455 17 H471 V24 H455 Z M460 17 V24 M465 17 V24 M467 94 H480 V103 H467 Z M473 94 V103 M627 138 L632 148 M730 265 V290 L750 280 M735 305 L720 290 M606 352 V380 M125 8 L145 14 M162 4 L172 14" />
      </g>
      <path d="M187 0 H208 V8 H187 Z M170 255 L189 260 L184 270 L168 264 Z M457 10 H469 V16 H457 Z M448 219 H461 V237 H448 Z" fill="#fce3e1" />

      <path d="M284 0 H325 L313 6 L305 15 H294 Z" fill="#9cc0f9" />
      <path d="M750 62 L725 122 L695 192 L675 229 L650 256 L623 296 L615 329 L607 352 L607 385 L618 420 L633 450 H668 L643 410 L634 379 L636 340 L660 292 L703 239 L727 189 L750 122 Z" fill="#9cc0f9" />
      <path d="M240 236 L310 282 Q335 290 360 289 L510 292 L560 316 L612 336" fill="none" stroke="#9cc0f9" strokeWidth="8" />
      <path d="M0 450 L18 438 L62 434 L100 438 L140 450 Z M0 395 L18 390 L15 405 L0 410 Z" fill="#9cc0f9" />
      <path d="M750 110 L720 180 L690 232 L640 290 L622 330 L620 450" fill="none" stroke="#7d9cc9" strokeWidth="0.800" strokeDasharray="6 5" />

      <g fill="none" stroke="#fccb6e" strokeLinejoin="round">
        <path strokeWidth="11" d="M752 130 L727 195 L703 239 L665 288 Q640 315 636 352 V378" />
        <path strokeWidth="9" d="M615 452 Q640 410 665 402 L750 392" />
        <path strokeWidth="12" d="M388 239 L387 286 L383 336 L377 402 L375 450" />
        <path strokeWidth="9" d="M0 336 Q8 348 33 353 L57 369 L70 385 M80 418 L140 413 L177 430 Q195 440 199 452 M0 432 L18 425" />
        <path strokeWidth="5" d="M118 0 L124 15 M545 330 L600 342 M636 350 L680 348 M700 352 L750 340" />
      </g>

      <g fill="none" stroke="#f5b12d" strokeWidth="2" strokeDasharray="10 3">
        {yellowRails.map((d) => <path key={d} d={d} />)}
        <path d="M396 239 L395 286 L391 336 L384 402 M380 239 L379 286 L375 336 L369 402" strokeWidth="2" />
      </g>
      <g fill="none" stroke="#9e9e9e" strokeWidth="3" strokeLinejoin="round">
        {rails.map((d) => <path key={d} d={d} />)}
        <path strokeWidth="7" d="M223 237 L262 250 L315 253 M345 239 L343 290 L327 340 M305 400 L318 375" />
        <path strokeWidth="6" d="M590 282 Q620 282 640 297 M560 319 Q575 306 607 301 L640 298" />
      </g>
      <g fill="none">
        <path d="M260 248 Q310 275 322 310 L318 375 L300 425 L292 450" stroke="#9e9e9e" strokeWidth="6" />
        <path d="M260 248 Q310 275 322 310 L318 375 L300 425 L292 450" stroke="#d5d7db" strokeWidth="3.500" strokeDasharray="22 6" />
        <path d="M356 239 L349 292 L327 356 L307 422 L299 450" stroke="#cfd2d6" strokeWidth="9" />
        <path d="M356 239 L349 292" stroke="#158a9b" strokeWidth="7" />
        <path d="M340 325 L328 356" stroke="#158a9b" strokeWidth="9" />
        <path d="M326 360 L309 416 M303 436 L299 450" stroke="#158a9b" strokeWidth="1.500" />
        <path d="M309 418 L303 436" stroke="#158a9b" strokeWidth="6" />
        <path d="M556 323 L507 368 M600 303 L577 308 M612 285 L634 295" stroke="#d5d7db" strokeWidth="3.500" />
      </g>

      <rect x="390" y="-9" width="36" height="21" fill="#589632" />
      <text x="393" y="8" fontSize="15" textLength="30" fill="#fff" fontFamily="'Noto Sans CJK JP', sans-serif">上野</text>
      <Label x={589} y={9} w={57}>田原町</Label>
      <Metro x={655} y={10} />
      <Shield x={705.5} y={24.5} n="463" kind="hex" />
      <Label x={428} y={61} w={19}>町</Label>
      <rect x="482" y="62" width="20" height="18" rx="3" fill="#fff" />
      <path d="M484 67.500 H492 M488 68 L486.500 76 M490 76 L498 67.500 M491 69 L496 76" stroke="#2b3f6b" strokeWidth="1.800" fill="none" />
      <Ginkgo x={511.5} y={70.5} />
      <Label x={523} y={71.5} w={77}>新御徒町</Label>
      <Pin x={442} y={140} />
      <Label x={460} y={135} w={146} size={20.5} fill="#4e707e">株式会社ミライ</Label>
      <Label x={461} y={156.5} w={176} size={20} fill="#4e707e">ＨＲ（ミライHR）</Label>
      <Label x={420} y={199} w={87} size={20.5} fill="#b5161b">SAMURAI</Label>
      <Ginkgo x={671} y={140} />
      <Label x={682} y={140} w={38}>蔵前</Label>
      <Label x={644} y={205} w={102} size={19.5} fill="#6b7378">【休館中】</Label>
      <Label x={686} y={226} w={80} size={20} fill="#6b7378">東京博物</Label>
      <Label x={725} y={246} w={48} size={16} fill="#6b7378">臨時休</Label>

      <g fill="#3c4043" fontSize="17" fontFamily="'Noto Sans CJK JP', sans-serif" textAnchor="middle" stroke="#fff" strokeWidth="2.500" paintOrder="stroke">
        <text transform="translate(56 240) rotate(-18)" y="5">営</text>
        <text transform="translate(63 254) rotate(-18)" y="5">三</text>
        <text transform="translate(71 269) rotate(-18)" y="6">田</text>
        <text transform="translate(78 286) rotate(-18)" y="6">線</text>
      </g>
      <Label x={108} y={288} w={96}>新御茶ノ水</Label>
      <Metro x={213.5} y={288.5} />
      <Label x={1} y={310} w={57}>神保町</Label>
      <Metro x={67.5} y={310.5} />
      <Ginkgo x={85} y={311} />
      <Label x={169} y={326} w={57}>小川町</Label>
      <Ginkgo x={238} y={326} />
      <Pin x={331} y={256} />
      <Label x={349} y={262} w={125} size={20} fill="#4e707e">㈱リアルビズ</Label>
      <Shield x={388.5} y={287.5} n="1" kind="green" />
      <Label x={315} y={317} w={57}>岩本町</Label>
      <Ginkgo x={384} y={318} />
      <Shield x={438.5} y={321.5} n="302" kind="hex" />
      <Label x={493} y={276} w={57}>浅草橋</Label>
      <Jr x={562} y={277} />
      <Ginkgo x={582} y={276.5} />
      <Shield x={674} y={281.5} n="6" kind="green" />
      <Shield x={577} y={337} n="14" kind="blue" />
      <Shield x={475.5} y={397} n="14" kind="blue" />
      <Shield x={25.5} y={351.5} n="5" kind="green" />
      <Label x={451} y={357} w={57}>馬喰町</Label>
      <Jr x={520} y={357} />
      <Label x={641} y={306} w={38}>両国</Label>
      <Pin x={677} y={338} />
      <circle cx="757" cy="272" r="15" fill="#80868b" />
      <Label x={597} y={345} w={61} size={20} fill="#5f7f8d">回向院</Label>
      <Pin x={545} y={389} />
      <Label x={564} y={386} w={92} size={20.5} fill="#4e707e">SAMURAI</Label>
      <Label x={564} y={407} w={138} size={20.5} fill="#4e707e">TECHNOLOGY</Label>
      <Label x={706} y={407} w={82} size={20.5} fill="#4e707e">株式会社</Label>
      <Label x={253} y={399} w={38}>神田</Label>
      <Jr x={302.5} y={399.5} />
      <Metro x={320} y={399.5} />
      <Label x={356} y={422} w={76}>小伝馬町</Label>
      <Metro x={442} y={422} />
      <rect x="60" y="391" width="58" height="21" fill="#589632" />
      <text x="74" y="407" fontSize="15" textLength="41" lengthAdjust="spacingAndGlyphs" fill="#fff" fontFamily="'Noto Sans CJK JP', sans-serif">ツ橋IC</text>
      <circle cx="18" cy="399" r="9" fill="#12828f" />
      <Label x={-13} y={406} w={18} size={18} fill="#12828f">館</Label>
      <Metro x={88.5} y={433.5} />
      <Label x={98} y={433} w={38}>竹橋</Label>
      <rect x="161" y="447" width="65" height="3" fill="#589632" />
      <circle cx="590" cy="450" r="14" fill="#8fd3da" />

      <text x="340" y="418" fontSize="25" textLength="70" lengthAdjust="spacingAndGlyphs" fontFamily="'Open Sans', sans-serif" stroke="#fff" strokeWidth="3" paintOrder="stroke" fontWeight="600">
        <tspan fill="#4285f4">G</tspan><tspan fill="#ea4335">o</tspan><tspan fill="#fbbc04">o</tspan><tspan fill="#4285f4">g</tspan><tspan fill="#34a853">l</tspan><tspan fill="#ea4335">e</tspan>
      </text>
    </svg>
  );
}

function PlaceCard() {
  return (
    <div className="absolute left-[15px] top-[15px] flex h-[224px] w-[426px] justify-between bg-white pl-[18px] shadow-[0_1px_4px_#0005] font-[Roboto,'Noto_Sans_CJK_JP',sans-serif] text-[18px] leading-none">
      <div className="flex flex-col items-start">
        <div className="mt-[19px] flex text-[21px] text-black">
          <T w={21}>㈱</T>
          <T w={92} className="font-medium">SAMURAI</T>
        </div>
        <div className="mt-[14px] flex flex-col items-start leading-[26px] font-light text-[#333]">
          <T w={296}>〒101-0022 東京都千代田区神田練塀</T>
          <T w={294}>町３００ 住友不動産秋葉原駅前ビル</T>
          <T w={19}>5F</T>
        </div>
        <div className="mt-[8px] flex items-center">
          <T w={29} className="text-[20px] font-medium text-[#5a5a5a]">3.0</T>
          <svg width="84" height="17" viewBox="0 0 84 17" className="ml-[5px]">
            {[0, 1, 2, 3, 4].map((i) => (
              <path key={i} transform={`translate(${i * 16.6} 0)`} d="M8.300 0 L10.300 6 H16.600 L11.500 9.800 L13.400 16 L8.300 12.200 L3.200 16 L5.100 9.800 L0 6 H6.300 Z" fill={i < 3 ? "#e7711b" : "#d0d0d0"} />
            ))}
          </svg>
          <T w={123} className="ml-[15px] font-light text-[#0b60dc]">6 件のクチコミ</T>
        </div>
        <T w={127} className="mt-[23px] font-light text-[#0b60dc]">拡大地図を表示</T>
      </div>
      <div className="mr-[28px] flex w-[56px] flex-col items-center pt-[21px]">
        <svg width="27" height="27" viewBox="0 0 27 27">
          <path d="M0 4 L4 0 L14 10 L10 15 Z" fill="#b4cdfb" />
          <path d="M10 27 V18 Q10 14 13 11 L18.500 5.500 L14 0 H27 V13 L22 9 L16.500 14.500 Q16 16 16 18 V27 Z" fill="#669df6" />
        </svg>
        <T w={55} className="mt-[12px] font-light text-[#0b60dc]">ルート</T>
      </div>
    </div>
  );
}

function MapWidget() {
  return (
    <div className="relative mt-[45px] h-[450px] w-[750px] overflow-hidden">
      <MapCanvas />
      <PlaceCard />
      <svg width="63" height="63" viewBox="0 0 63 63" className="absolute left-[15px] top-[371px] rounded-[3px] shadow-[0_1px_4px_#0006]">
        <defs>
          <filter id="aerial" x="0" y="0" width="1" height="1" colorInterpolationFilters="sRGB">
            <feTurbulence type="fractalNoise" baseFrequency="0.350" numOctaves="3" seed="4" />
            <feColorMatrix values="0.600 0 0 0 0.060  0.600 0 0 0 0.060  0.600 0 0 0 0.040  0 0 0 0 1" />
          </filter>
        </defs>
        <rect width="63" height="63" fill="#fff" />
        <rect x="3" y="3" width="57" height="57" filter="url(#aerial)" />
        <rect x="3" y="42" width="57" height="18" fill="#7a5f50" opacity="0.250" />
      </svg>
      <div className="absolute left-[675px] top-[293px] flex h-[121px] w-[60px] flex-col items-center justify-between bg-white py-4 shadow-[0_1px_4px_#0004]">
        <svg width="28" height="28" viewBox="0 0 28 28"><path d="M14 0 V28 M0 14 H28" stroke="#666" strokeWidth="6" /></svg>
        <div className="h-px w-[45px] bg-[#e0e0e0]" />
        <svg width="28" height="28" viewBox="0 0 28 28"><path d="M0 14 H28" stroke="#666" strokeWidth="6" /></svg>
      </div>
      <div className="absolute bottom-0 right-0 flex h-[21px] items-center bg-[#f5f5f5cc] pl-2 pr-[9px] font-[Roboto,'Noto_Sans_CJK_JP',sans-serif] text-[15px] font-[350] leading-none text-black">
        <T w={183}>キーボード ショートカット</T>
        <T w={176} className="ml-[18px]">地図データ ©2023 Google</T>
        <T w={60} className="ml-[17px]">利用規約</T>
      </div>
    </div>
  );
}

const links: [string, number][] = [["Instagram", 108], ["Facebook", 103], ["Twitter", 73]];

function Footer() {
  return (
    <div className="flex h-[794px] bg-[#313b48] pl-[451px] font-[Inter,'Noto_Sans_CJK_JP',sans-serif] text-white">
      <div className="w-[929px] pt-[165px]">
        <div className="ml-[2px] flex h-9 items-center border-l-4 border-[#f1ad3f] pl-[28px] text-[28px] font-medium leading-none">
          <T w={20} className="text-[#f1ad3f]">A</T>
          <T w={91}>CCESS</T>
        </div>
        <div className="mt-[114px] flex h-[60px] items-center pl-[62px] text-[53px] font-light leading-none">
          <T w={253}>Hair Tech</T>
        </div>
        <div className="mt-[71px] flex flex-col items-start pl-[62px] text-[23px] leading-[37px]">
          <T w={456}>〒150-0043 東京都渋谷区道玄坂2丁目11-1</T>
          <T w={269}>Gスクエア渋谷道玄坂4F</T>
        </div>
        <div className="mt-[37px] flex flex-col pl-[61px] text-[20.500px] leading-none">
          {links.map(([label, w]) => (
            <div key={label} className="flex h-[46.500px] items-center">
              <svg width="8" height="14" viewBox="0 0 8 14" className="mb-[6px]">
                <path d="M1 2 L6 7 L1 12" fill="none" stroke="#fff" strokeWidth="1.900" />
              </svg>
              <T w={w} className="ml-[22px]">{label}</T>
            </div>
          ))}
        </div>
      </div>
      <div className="pt-[120px]">
        <div className="flex h-9 items-center border-l-4 border-[#f1ad3f] pl-[29px] text-[28px] font-medium leading-none">
          <T w={26} className="text-[#f1ad3f]">M</T>
          <T w={40}>AP</T>
        </div>
        <MapWidget />
      </div>
    </div>
  );
}

function Copyright() {
  return (
    <div className="relative flex h-[92px] items-center gap-[5px] bg-[#292f3d] pl-[450px] font-[Inter,sans-serif] text-[17.500px] leading-none text-white">
      <T w={157}>Copyright © 2023</T>
      <T w={84} className="text-[#a3a5a9]">Hair Tech</T>
      <T w={237}>All rights reserved. Theme:</T>
      <T w={47} className="text-[#a3a5a9]">Flash</T>
      <T w={241}>by ThemeGrill. Powered by</T>
      <T w={97} className="text-[#a3a5a9]">WordPress</T>
      <div className="absolute right-[30px] top-[1px] flex h-[61px] w-[69px] items-center justify-center rounded-[4px] bg-[#8d6f3d]">
        <svg width="20" height="13" viewBox="0 0 20 13">
          <path d="M2 11 L10 3 L18 11" fill="none" stroke="#9497a0" strokeWidth="4.500" />
        </svg>
      </div>
    </div>
  );
}

function Scrollbar() {
  return (
    <div className="flex w-[34px] flex-col items-center bg-[#f1f1f1]">
      <svg width="16" height="8" viewBox="0 0 16 8" className="mt-[14px] shrink-0"><path d="M8 0 L16 8 H0 Z" fill="#505050" /></svg>
      <div className="mt-[1184px] h-[276px] w-[30px] shrink-0 bg-[#c1c1c1]" />
      <svg width="16" height="8" viewBox="0 0 16 8" className="mt-3 shrink-0"><path d="M8 8 L16 0 H0 Z" fill="#a3a3a3" /></svg>
    </div>
  );
}

function Taskbar() {
  return (
    <div className="relative flex h-12 items-center justify-end border-t-2 border-[#4a4340] bg-[linear-gradient(90deg,#211d2b_0%,#231f2d_18%,#272226_28%,#2b211f_38%,#2e2117_48%,#351e13_58%,#2e1f1b_70%,#331c1e_84%,#2d1e1a_100%)] pr-7 text-white">
      <div className="absolute left-[1248px] top-[18px] h-[6px] w-[240px] rounded-full bg-[#a0958f]" />
      <svg width="24" height="32" viewBox="0 0 24 32">
        <path d="M1 31 L12 2 L23 31 M5 21 H19" fill="none" stroke="#fff" strokeWidth="2" />
      </svg>
      <svg width="32" height="24" viewBox="0 0 32 24" className="-mt-1 ml-9" fill="none" stroke="#fff" strokeWidth="2">
        <path d="M1 9 Q16 -6 31 9 M6 13.500 Q16 3 26 13.500 M10.500 17.500 Q16 11.500 21.500 17.500" />
        <circle cx="16" cy="20" r="2" fill="#fff" />
      </svg>
      <svg width="32" height="28" viewBox="0 0 32 28" className="-mt-[2px] ml-4" fill="none" stroke="#fff" strokeWidth="2">
        <path d="M1 9.500 H6 L13 3 V25 L6 18.500 H1 Z" strokeLinejoin="round" />
        <path d="M17 9 Q20 14 17 19" />
        <path d="M20.500 5 Q27 14 20.500 23 M24.500 1.500 Q34 14 24.500 26.500" stroke="#655453" />
      </svg>
      <svg width="32" height="26" viewBox="0 0 32 26" className="-mt-[6px] ml-4">
        <path d="M10 6.500 H25 Q28 6.500 28 9.500 V22 Q28 25 25 25 H4 Q1 25 1 22 V15" fill="none" stroke="#fff" strokeWidth="2" />
        <path d="M28 13 H32 V19 H28 Z M11 10 H18 V21 H4.500 V18 Z" fill="#fff" />
        <path d="M5 0 L0 11 H5 L3 18 L11 7 H7 L8 0 Z" fill="#fff" />
      </svg>
      <T w={57} className="-mt-[4px] ml-8 text-[24px] leading-none">21:57</T>
      <div className="-mt-[2px] ml-[26px] size-2 rounded-full bg-[#d99be6]" />
    </div>
  );
}

export default function App() {
  return (
    <div className="h-[1824px] w-[2736px] overflow-hidden font-['Noto_Sans','Noto_Sans_CJK_JP',sans-serif]">
      <TabStrip />
      <Toolbar />
      <BookmarksBar />
      <div className="flex h-[1516px]">
        <div className="w-[2702px]">
          <AdminBar />
          <SiteHeader />
          <ContactForm />
          <Footer />
          <Copyright />
        </div>
        <Scrollbar />
      </div>
      <Taskbar />
    </div>
  );
}
